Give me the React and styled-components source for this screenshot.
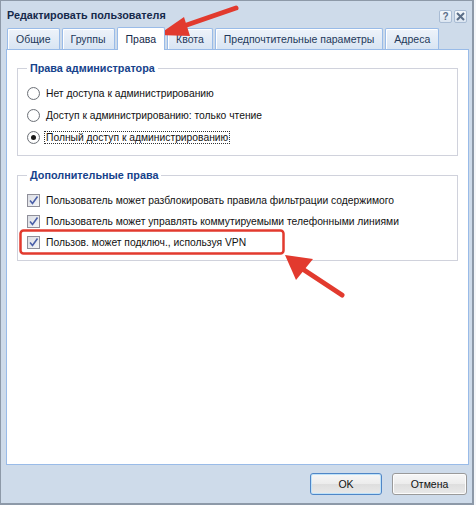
import React from 'react'
import styled, {createGlobalStyle} from 'styled-components'

const GlobalStyle = createGlobalStyle`
  body {
    margin: 0;
    background: #f4f6f9;
    font-family: 'Liberation Sans', Arial, sans-serif;
    font-size: 10.3px;
    color: #000;
  }
`

const tabs = [
  {label: 'Общие'},
  {label: 'Группы'},
  {label: 'Права', active: true},
  {label: 'Квота'},
  {label: 'Предпочтительные параметры'},
  {label: 'Адреса'}
]

const radios = [
  {label: 'Нет доступа к администрированию'},
  {label: 'Доступ к администрированию: только чтение'},
  {label: 'Полный доступ к администрированию', checked: true}
]

const checks = [
  'Пользователь может разблокировать правила фильтрации содержимого',
  'Пользователь может управлять коммутируемыми телефонными линиями',
  'Пользов. может подключ., используя VPN'
]

export default function App() {
  return (
    <>
      <GlobalStyle />
      <Stage>
        <Window>
          <TitleBar>
            <Title>Редактировать пользователя</Title>
            <Tools>
              <ToolButton>?</ToolButton>
              <ToolButton>
                <svg width="9" height="9" viewBox="0 0 9 9">
                  <path d="M1 1L8 8M8 1L1 8" stroke="#5b6e88" strokeWidth="2" />
                </svg>
              </ToolButton>
            </Tools>
          </TitleBar>

          <TabStrip>
            {tabs.map(t => (
              <Tab key={t.label} $active={t.active}>
                {t.label}
              </Tab>
            ))}
          </TabStrip>

          <Panel>
            <Group>
              <Legend>Права администратора</Legend>
              <OptionList $gap={7}>
                {radios.map(r => (
                  <Option key={r.label}>
                    <Radio $checked={r.checked} />
                    <OptionText $focused={r.checked}>{r.label}</OptionText>
                  </Option>
                ))}
              </OptionList>
            </Group>

            <Group>
              <Legend>Дополнительные права</Legend>
              <OptionList $gap={6}>
                {checks.map(c => (
                  <Option key={c}>
                    <CheckBox>
                      <svg width="11" height="11" viewBox="0 0 11 11">
                        <path
                          d="M2 5.5L4.5 8.5L9.5 1.5"
                          fill="none"
                          stroke="#4a5fa8"
                          strokeWidth="1.6"
                        />
                      </svg>
                    </CheckBox>
                    <OptionText>{c}</OptionText>
                  </Option>
                ))}
              </OptionList>
            </Group>
          </Panel>

          <Footer>
            <Button $primary>OK</Button>
            <Button>Отмена</Button>
          </Footer>
        </Window>

        <Overlay width="476" height="505" viewBox="0 0 476 505">
          <rect
            x="20.5"
            y="230.5"
            width="263"
            height="23"
            rx="3"
            fill="none"
            stroke="#e23a2e"
            strokeWidth="2.5"
          />
          <line
            x1="236"
            y1="8"
            x2="178"
            y2="28"
            stroke="#e23a2e"
            strokeWidth="5"
            strokeLinecap="round"
          />
          <polygon points="158,35 184,17 190,36" fill="#e23a2e" />
          <line
            x1="342"
            y1="295"
            x2="298"
            y2="266"
            stroke="#e23a2e"
            strokeWidth="5"
            strokeLinecap="round"
          />
          <polygon points="285,255 313,259 296,280" fill="#e23a2e" />
        </Overlay>
      </Stage>
    </>
  )
}

const Stage = styled.div`
  position: relative;
  width: 476px;
  height: 505px;
`

const Window = styled.div`
  box-sizing: border-box;
  width: 474px;
  height: 505px;
  border: 1px solid #8d99a8;
  border-right-width: 2px;
  border-bottom-width: 2px;
  background: #cedbea;
  display: flex;
  flex-direction: column;
`

const TitleBar = styled.div`
  height: 26px;
  display: flex;
  align-items: center;
  justify-content: space-between;
  padding: 0 5px 0 6px;
`

const Title = styled.div`
  font-weight: bold;
  font-size: 10.8px;
  color: #15294a;
  margin-top: 2px;
`

const Tools = styled.div`
  display: flex;
  gap: 2px;
  margin-top: 4px;
`

const ToolButton = styled.div`
  width: 13px;
  height: 13px;
  box-sizing: border-box;
  border: 1px solid #a9bcd4;
  background: linear-gradient(#f4f8fc, #dbe5f1);
  border-radius: 2px;
  display: flex;
  align-items: center;
  justify-content: center;
  font-weight: bold;
  font-size: 10px;
  color: #5b6e88;
`

const TabStrip = styled.div`
  display: flex;
  align-items: flex-end;
  gap: 2px;
  height: 22px;
  padding-left: 6px;
`

const Tab = styled.div`
  box-sizing: border-box;
  height: ${p => (p.$active ? '23px' : '21px')};
  margin-bottom: ${p => (p.$active ? '-1px' : '0')};
  padding: 0 8px;
  display: flex;
  align-items: center;
  white-space: nowrap;
  font-size: 10.5px;
  color: ${p => (p.$active ? '#15294a' : '#23395a')};
  background: ${p =>
    p.$active ? '#ffffff' : 'linear-gradient(#eef3fa, #d9e5f3)'};
  border: 1px solid #99bbe8;
  border-bottom: none;
  border-radius: 2px 2px 0 0;
  box-shadow: inset 1px 1px 0 #fff;
  position: relative;
  z-index: ${p => (p.$active ? 1 : 0)};
`

const Panel = styled.div`
  flex: 1;
  margin: 0 3px 0 5px;
  background: #fff;
  border: 1px solid #99bbe8;
  padding: 12px 10px 0 10px;
  display: flex;
  flex-direction: column;
  gap: 13px;
`

const Group = styled.fieldset`
  margin: 0;
  padding: 5px 10px 10px 9px;
  border: 1px solid #d0d2dc;
  border-radius: 0;
`

const Legend = styled.legend`
  padding: 0 3px;
  margin-left: 0;
  font-weight: bold;
  font-size: 10.8px;
  color: #15428b;
`

const OptionList = styled.div`
  display: flex;
  flex-direction: column;
  gap: ${p => p.$gap}px;
  padding-top: 7px;
`

const Option = styled.div`
  display: flex;
  align-items: center;
  gap: 5px;
  height: 15px;
`

const Radio = styled.span`
  box-sizing: border-box;
  width: 13px;
  height: 13px;
  border-radius: 50%;
  border: 1px solid #6e7278;
  background: radial-gradient(circle, #fff 55%, #e6e8ec);
  display: flex;
  align-items: center;
  justify-content: center;

  &::after {
    content: '';
    width: 5px;
    height: 5px;
    border-radius: 50%;
    background: ${p => (p.$checked ? '#1a1a1a' : 'transparent')};
  }
`

const CheckBox = styled.span`
  box-sizing: border-box;
  width: 13px;
  height: 13px;
  border: 1px solid #8f8f9a;
  background: linear-gradient(135deg, #dcdee4, #f4f5f7);
  display: flex;
  align-items: center;
  justify-content: center;
`

const OptionText = styled.span`
  font-size: 10.3px;
  color: #111;
  padding: 0 1px;
  outline: ${p => (p.$focused ? '1px dotted #333' : 'none')};
`

const Footer = styled.div`
  height: 38px;
  display: flex;
  align-items: center;
  justify-content: flex-end;
  gap: 10px;
  padding-right: 5px;
`

const Button = styled.div`
  box-sizing: border-box;
  width: ${p => (p.$primary ? '72px' : '75px')};
  height: 22px;
  display: flex;
  align-items: center;
  justify-content: center;
  font-size: 10.5px;
  color: #111;
  border-radius: 3px;
  border: 1px solid ${p => (p.$primary ? '#4f86c7' : '#9a9a9a')};
  background: linear-gradient(#f7f7f7 0%, #ececec 50%, #dedede 51%, #e9e9e9 100%);
  box-shadow: inset 0 0 0 1px ${p => (p.$primary ? '#bfe2f9' : '#fcfcfc')};
`

const Overlay = styled.svg`
  position: absolute;
  left: 0;
  top: 0;
  pointer-events: none;
`
